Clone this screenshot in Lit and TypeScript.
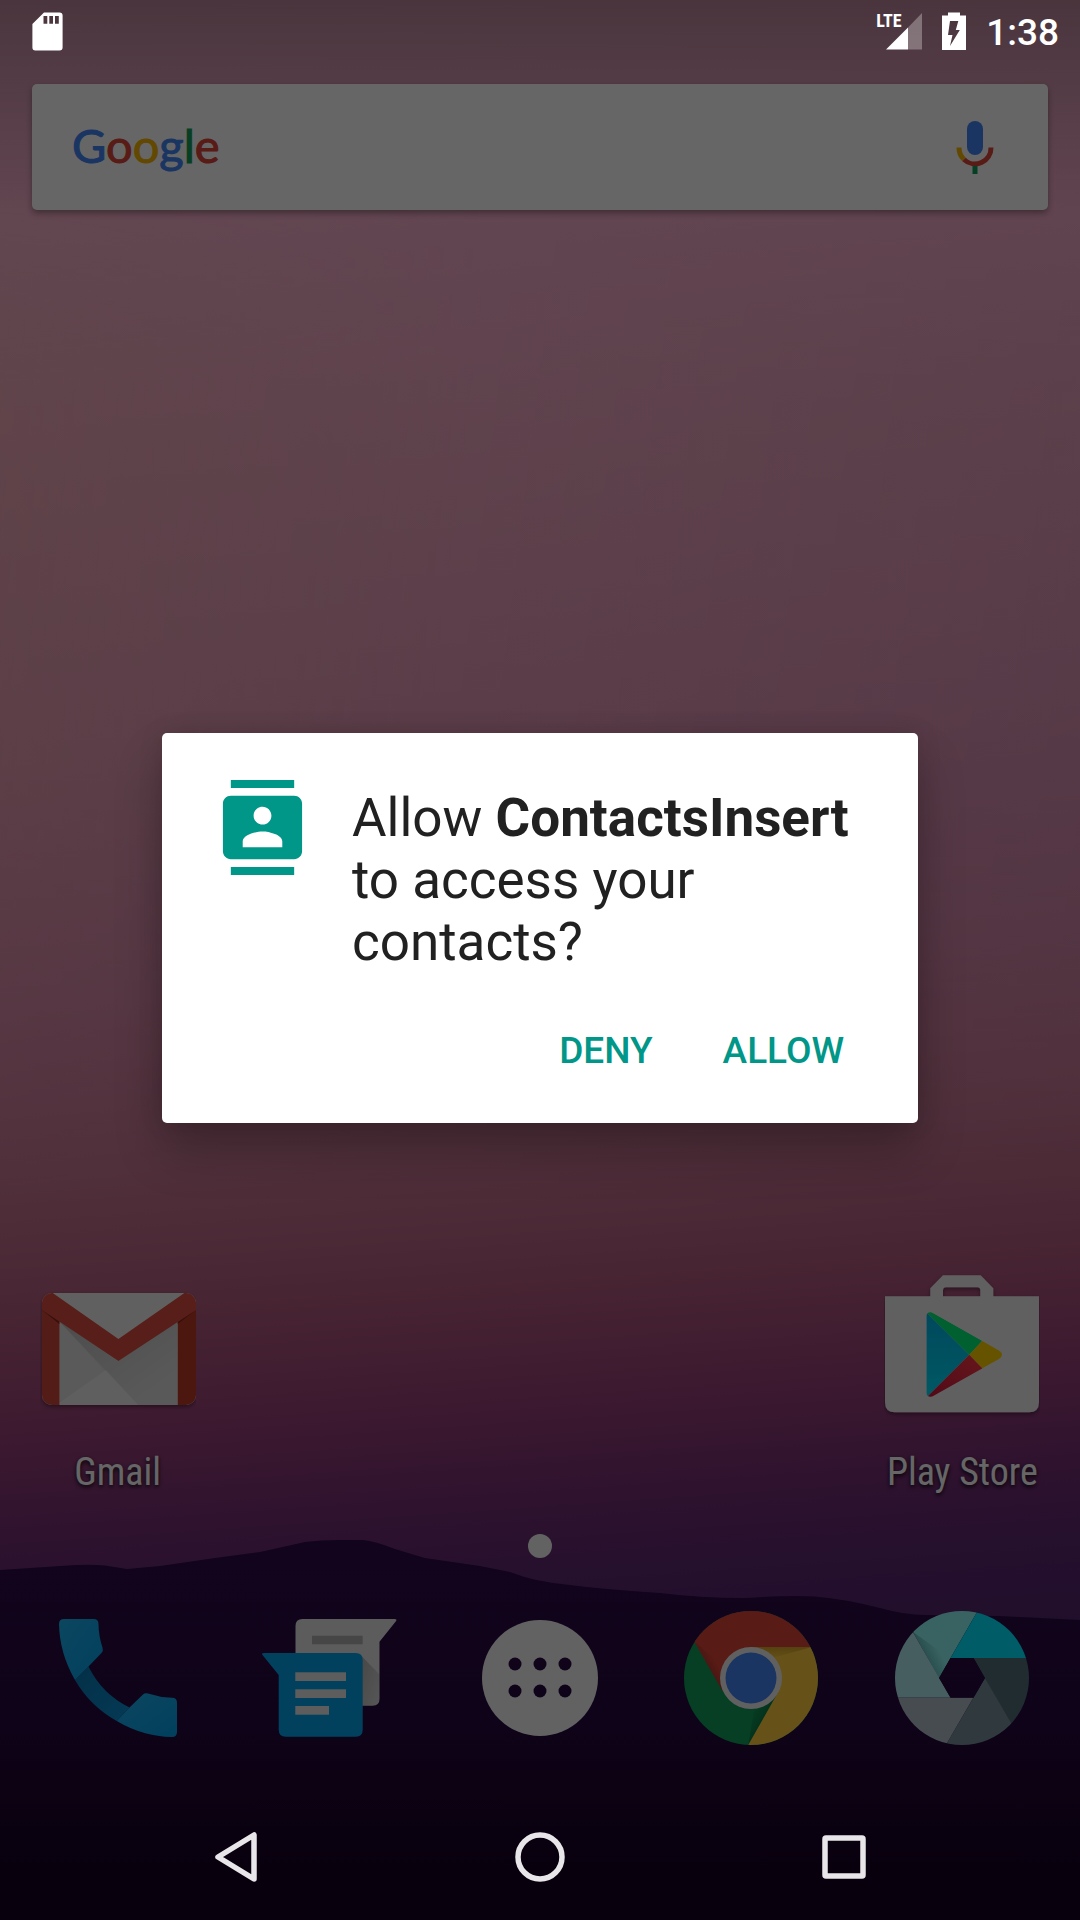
import { LitElement, html, css, svg } from "lit";
import { customElement, property, state } from "lit/decorators.js";

/* ---------- Application icons, all on a 156 x 156 canvas ---------- */

const gmailIcon = svg`
  <svg viewBox="0 0 156 156" width="156" height="156" aria-hidden="true">
    <defs>
      <clipPath id="gm-clip"><rect x="2" y="21" width="154" height="112" rx="10"/></clipPath>
      <linearGradient id="gm-shade" x1="0" y1="0" x2="1" y2="1">
        <stop offset="0" stop-color="#000" stop-opacity=".14"/>
        <stop offset=".8" stop-color="#000" stop-opacity="0"/>
      </linearGradient>
      <filter id="gm-drop" x="-10%" y="-10%" width="120%" height="130%">
        <feDropShadow dx="0" dy="2" stdDeviation="2" flood-color="#000" flood-opacity=".4"/>
      </filter>
    </defs>
    <g filter="url(#gm-drop)">
      <g clip-path="url(#gm-clip)">
        <rect x="2" y="21" width="154" height="112" fill="#eeeeee"/>
        <path d="M19 49 L66 98 L19 131Z" fill="#e0e0e0"/>
        <path d="M19 49 L78 89 L137 49 V133 H95Z" fill="#dedede"/>
        <path d="M19 133 L66 98 L98 133Z" fill="#eeeeee"/>
        <path d="M19 49 L78 89 L137 49 V133 H98Z" fill="url(#gm-shade)"/>
        <path d="M2 30 H19.400 V133 H2Z" fill="#cf4637"/>
        <path d="M137.700 30 H156 V133 H137.700Z" fill="#bd3a26"/>
        <path d="M2 38 L19.400 52 V49 L2 36Z M156 38 L137.700 52 V49Z" fill="#8e2318"/>
        <path d="M12.700 21 H144.400 L78.400 67Z" fill="#f0f0f0"/>
        <path d="M2 21 H12.700 L78.400 67 L144.400 21 H156 V38 L78.400 89 L2 38Z" fill="#db4b40"/>
      </g>
    </g>
  </svg>`;

const playIcon = svg`
  <svg viewBox="0 0 156 156" width="156" height="156" aria-hidden="true">
    <defs>
      <linearGradient id="pl-blue" x1="0" y1="0" x2="0" y2="1">
        <stop offset="0" stop-color="#00b4e6"/><stop offset="1" stop-color="#00e0fa"/>
      </linearGradient>
      <linearGradient id="pl-red" x1="1" y1="0" x2="0" y2="1">
        <stop offset="0" stop-color="#ff3a44"/><stop offset="1" stop-color="#c9163c"/>
      </linearGradient>
      <clipPath id="pl-clip">
        <path d="M42.600 44 Q42.600 40 47 40.300 Q48.500 40.500 51 42 L115 78.500 Q118 80.500 118 82.700 Q118 85 115 87 L51 123 Q48.500 124.500 47 124.700 Q42.600 125 42.600 121Z"/>
      </clipPath>
      <filter id="pl-drop" x="-10%" y="-10%" width="120%" height="130%">
        <feDropShadow dx="0" dy="2" stdDeviation="2" flood-color="#000" flood-opacity=".4"/>
      </filter>
    </defs>
    <path filter="url(#pl-drop)" fill="#f1f1f1" fill-rule="evenodd"
      d="M1 24.300 H46.300 V16.300 L59 3.300 H96.600 L109.300 16.300 V24.300 H155 V130.300 Q155 140.300 145 140.300 H11 Q1 140.300 1 130.300Z M59 24.300 H96.300 V18.300 Q96.300 15.300 93.300 15.300 H62 Q59 15.300 59 18.300Z"/>
    <g clip-path="url(#pl-clip)">
      <path d="M40 38 L85.300 82.700 L40 128Z" fill="url(#pl-blue)"/>
      <path d="M43.500 38 L98.300 68.700 L85.300 82.700 L42 40Z" fill="#00f076"/>
      <path d="M98.300 68.700 L85.300 82.700 L98.300 96.500 L122 84 V76 L98.300 66Z" fill="#ffd000"/>
      <path d="M85.300 82.700 L98.900 97 L44 130 L42 126Z" fill="url(#pl-red)"/>
    </g>
  </svg>`;

const phoneIcon = svg`
  <svg viewBox="0 0 156 156" width="156" height="156" aria-hidden="true">
    <defs>
      <linearGradient id="ph-fill" x1="0" y1="0" x2="1" y2="1">
        <stop offset="0" stop-color="#1fb0ee"/><stop offset="1" stop-color="#03a0ea"/>
      </linearGradient>
      <linearGradient id="ph-mid" x1="0" y1="0" x2="1" y2="1">
        <stop offset="0" stop-color="#0a78b4"/><stop offset="1" stop-color="#0c90d4"/>
      </linearGradient>
    </defs>
    <path fill="url(#ph-mid)" d="M48.500 66.500 Q62 94 89.500 107.500 L76.700 121 Q50 106 35 80Z"/>
    <path fill="url(#ph-fill)" d="M24 19 H53.500 Q58.500 19 58.500 24 Q58.600 36 62.600 48 Q63.500 50.500 61.500 53 L48.500 66.500 L35 80 Q19.500 53 19 24 Q19 19 24 19Z"/>
    <path fill="url(#ph-fill)" d="M76.700 121 L89.500 107.500 L103 94.500 Q105 92.500 108 93.500 Q120 97.500 132 97.800 Q137 97.800 137 102.800 V132 Q137 137 132 137 Q103 136.500 76.700 121Z"/>
  </svg>`;

const messengerIcon = svg`
  <svg viewBox="0 0 156 156" width="156" height="156" aria-hidden="true">
    <defs>
      <linearGradient id="ms-shade" x1="0" y1="0" x2="1" y2="1">
        <stop offset="0" stop-color="#000" stop-opacity=".22"/>
        <stop offset="1" stop-color="#000" stop-opacity=".06"/>
      </linearGradient>
    </defs>
    <path fill="#e6e6e6" d="M51.500 19 H143.500 Q146.700 19 144.700 21.500 L128.500 41.700 V98.700 Q128.500 105.700 121.500 105.700 H44.500 V26 Q44.500 19 51.500 19Z"/>
    <path fill="url(#ms-shade)" d="M110 55.500 L128.500 74.500 V98.700 Q128.500 105.700 121.500 105.700 H110Z"/>
    <rect x="61" y="35.700" width="50.700" height="8.600" fill="#b0b0b0"/>
    <path fill="#03a4ec" d="M13 53 H104.700 Q111.700 53 111.700 60 V129.700 Q111.700 136.700 104.700 136.700 H34.700 Q27.700 136.700 27.700 129.700 V75 L11.500 55 Q10 53 13 53Z"/>
    <g fill="#e9e9e9">
      <rect x="44.300" y="72.300" width="50.700" height="8.700"/>
      <rect x="44.300" y="89.300" width="50.700" height="8.700"/>
      <rect x="44.300" y="106" width="33.700" height="8.700"/>
    </g>
  </svg>`;

const appsIcon = svg`
  <svg viewBox="0 0 156 156" width="156" height="156" aria-hidden="true">
    <mask id="ap-holes">
      <rect width="156" height="156" fill="#fff"/>
      <g fill="#000">
        ${[53, 78, 103].map((x) => [64, 91].map((y) => svg`<circle cx=${x} cy=${y} r="6.500"/>`))}
      </g>
    </mask>
    <circle cx="78" cy="78" r="58" fill="#f5f5f5" mask="url(#ap-holes)"/>
  </svg>`;

const chromeIcon = svg`
  <svg viewBox="0 0 156 156" width="156" height="156" aria-hidden="true">
    <defs>
      <clipPath id="ch-clip"><circle cx="78" cy="78" r="67"/></clipPath>
      <linearGradient id="ch-r" gradientUnits="userSpaceOnUse" x1="29" y1="74" x2="44" y2="65">
        <stop offset="0" stop-color="#000" stop-opacity=".3"/><stop offset="1" stop-color="#000" stop-opacity="0"/>
      </linearGradient>
      <linearGradient id="ch-y" gradientUnits="userSpaceOnUse" x1="0" y1="47" x2="0" y2="60">
        <stop offset="0" stop-color="#8a5a00" stop-opacity=".35"/><stop offset="1" stop-color="#8a5a00" stop-opacity="0"/>
      </linearGradient>
      <linearGradient id="ch-g" gradientUnits="userSpaceOnUse" x1="90" y1="120" x2="76" y2="112">
        <stop offset="0" stop-color="#000" stop-opacity=".2"/><stop offset="1" stop-color="#000" stop-opacity="0"/>
      </linearGradient>
    </defs>
    <g clip-path="url(#ch-clip)">
      <rect width="156" height="156" fill="#0f9d58"/>
      <path d="M102.800 96.700 L75 146 L82 106Z" fill="url(#ch-g)"/>
      <path d="M78 47 H150 V156 H69 L105 92.500 L78 78Z" fill="#ffcd40"/>
      <path d="M78 47 H139 L100 58Z" fill="url(#ch-y)"/>
      <path d="M18 36 L49.500 91 L78 78 V47 H156 V0 H0Z" fill="#db4437"/>
      <path d="M21.500 41.700 L49.500 91 L50 66Z" fill="url(#ch-r)"/>
    </g>
    <circle cx="78" cy="78" r="31" fill="#f1f1f1"/>
    <circle cx="78" cy="78" r="25.500" fill="#4285f4"/>
  </svg>`;

const cameraIcon = svg`
  <svg viewBox="0 0 156 156" width="156" height="156" aria-hidden="true">
    <defs>
      <mask id="cm-mask">
        <circle cx="78" cy="78" r="67" fill="#fff"/>
        <path d="M66.500 58 H89.500 L101 78 L89.500 97.700 H66.500 L55 78Z" fill="#000"/>
      </mask>
      <linearGradient id="cm-shade" gradientUnits="userSpaceOnUse" x1="38" y1="50" x2="52" y2="43">
        <stop offset="0" stop-color="#004d50" stop-opacity=".3"/><stop offset="1" stop-color="#004d50" stop-opacity="0"/>
      </linearGradient>
    </defs>
    <g mask="url(#cm-mask)">
      <path d="M55 78 L24 23 L60 0 H100 L66.500 58Z" fill="#90f8f4"/>
      <path d="M55 78 L29 32 L66 58Z" fill="url(#cm-shade)"/>
      <path d="M66.500 58 L100 0 H156 V58Z" fill="#00e5ff"/>
      <path d="M89.500 58 H156 V130 L130 130Z" fill="#546e7a"/>
      <path d="M101 78 L131 130 L120 156 H55.500 L89.500 97.700Z" fill="#78909c"/>
      <path d="M0 97.500 H89.500 L55.500 156 H0Z" fill="#b0bec5"/>
      <path d="M0 97.500 V20 L22 20 L66.500 97.500Z" fill="#b2ebf2"/>
    </g>
  </svg>`;

/* ---------- Status, search and dialog glyphs ---------- */

const sdCardIcon = svg`
  <svg viewBox="0 0 32 40" width="32" height="40" aria-hidden="true">
    <path fill="#fff" fill-rule="evenodd" d="M12 -.5 H27.500 Q30.600 -.5 30.600 2.500 V34.500 Q30.600 37.500 27.500 37.500 H3.300 Q.4 37.500 .4 34.500 V11Z
      M11.500 3 V10.800 H15.300 V3Z M17.300 3 V10.800 H21 V3Z M23 3 V10.800 H26.800 V3Z"/>
  </svg>`;

const signalIcon = svg`
  <svg viewBox="0 0 36 38" width="36" height="38" aria-hidden="true">
    <path fill="#fff" fill-opacity=".3" d="M36 -1 V35.500 H22 V13.500Z"/>
    <path fill="#fff" d="M22 13.500 V35.500 H0Z"/>
  </svg>`;

const batteryIcon = svg`
  <svg viewBox="0 0 24 40" width="24" height="40" aria-hidden="true">
    <path fill="#fff" fill-rule="evenodd" d="M6 -.6 H18 V2.400 H24 V37 H0 V2.400 H6Z
      M8 8 H16.300 L13.800 17 H17.800 L8 33 L10.500 22 H6Z"/>
  </svg>`;

const micIcon = svg`
  <svg viewBox="0 0 40 56" width="40" height="56" aria-hidden="true">
    <rect x="12" y="2" width="16" height="34" rx="8" fill="#4285f4"/>
    <path d="M4 28.500 A16 16 0 0 0 9 40.500" fill="none" stroke="#f4b400" stroke-width="5"/>
    <path d="M36 28.500 A16 16 0 0 1 9 40.500" fill="none" stroke="#db4437" stroke-width="5"/>
    <rect x="17.500" y="47" width="5" height="8" fill="#0f9d58"/>
  </svg>`;

const contactsIcon = svg`
  <svg viewBox="0 0 24 24" width="95" height="95" aria-hidden="true">
    <path fill="#009688" d="M20 0H4v2h16V0zM4 24h16v-2H4v2zM20 4H4c-1.100 0-2 .9-2 2v12c0 1.100.9 2 2 2h16c1.100 0 2-.9 2-2V6c0-1.100-.9-2-2-2zm-8 2.750c1.240 0 2.250 1.010 2.250 2.250s-1.010 2.250-2.250 2.250S9.750 10.240 9.750 9 10.760 6.750 12 6.750zM17 17H7v-1.500c0-1.670 3.330-2.500 5-2.500s5 .83 5 2.500V17z"/>
  </svg>`;

@customElement("status-bar")
class StatusBar extends LitElement {
  @property() time = "";

  static styles = css`
    :host {
      display: flex;
      align-items: center;
      height: 66px;
      padding: 0 21px 0 32px;
      box-sizing: border-box;
      color: #fff;
      font-family: Roboto, sans-serif;
    }
    svg {
      display: block;
      overflow: visible;
    }
    .right {
      display: flex;
      align-items: center;
      gap: 20px;
      margin-left: auto;
    }
    .network {
      position: relative;
      padding-left: 10px;
    }
    .type {
      position: absolute;
      left: 0;
      top: -2px;
      font: bold 18px/18px "Roboto Condensed", "Liberation Sans Narrow", Roboto, sans-serif;
    }
    .time {
      font-size: 37px;
      line-height: 44px;
      font-weight: 500;
    }
  `;

  render() {
    return html`
      ${sdCardIcon}
      <div class="right">
        <div class="network"><span class="type">LTE</span>${signalIcon}</div>
        ${batteryIcon}
        <span class="time">${this.time}</span>
      </div>
    `;
  }
}

@customElement("search-bar")
class SearchBar extends LitElement {
  static styles = css`
    :host {
      display: flex;
      align-items: center;
      justify-content: space-between;
      height: 126px;
      padding: 0 53px 0 40px;
      box-sizing: border-box;
      border-radius: 5px;
      background: #fff;
      box-shadow: 0 3px 6px rgba(0, 0, 0, 0.35);
    }
    button {
      display: block;
      margin: 0;
      padding: 0;
      border: 0;
      background: none;
    }
    .logo {
      padding-bottom: 4px;
      font: 400 47px/60px Lato, sans-serif;
      -webkit-text-stroke: 1px;
    }
    .blue {
      color: #4285f4;
    }
    .red {
      color: #db4437;
    }
    .yellow {
      color: #f4b400;
    }
    .green {
      color: #0f9d58;
    }
    svg {
      display: block;
    }
  `;

  render() {
    return html`
      <button class="logo" aria-label="Google"
        ><span class="blue">G</span><span class="red">o</span><span class="yellow">o</span
        ><span class="blue">g</span><span class="green">l</span><span class="red">e</span></button>
      <button aria-label="Voice search">${micIcon}</button>
    `;
  }
}

@customElement("app-shortcut")
class AppShortcut extends LitElement {
  @property() name = "";
  @property({ type: Boolean }) labelled = false;
  @property({ attribute: false }) icon: unknown;

  static styles = css`
    button {
      display: flex;
      flex-direction: column;
      align-items: center;
      gap: 22px;
      width: 100%;
      margin: 0;
      padding: 0;
      border: 0;
      background: none;
    }
    svg {
      display: block;
    }
    .label {
      color: #fff;
      font: 400 38px/44px "Roboto Condensed", "Liberation Sans Narrow", Roboto, sans-serif;
      white-space: nowrap;
      text-shadow: 0 2px 4px rgba(0, 0, 0, 0.9);
    }
  `;

  render() {
    return html`
      <button aria-label=${this.name}>
        ${this.icon}${this.labelled ? html`<span class="label">${this.name}</span>` : null}
      </button>
    `;
  }
}

@customElement("permission-dialog")
class PermissionDialog extends LitElement {
  @property() app = "";
  @property() resource = "";

  static styles = css`
    :host {
      display: block;
      width: 70%;
      box-sizing: border-box;
      padding: 47px 39px 30px 53px;
      border-radius: 5px;
      background: #fff;
      box-shadow: 0 28px 48px rgba(0, 0, 0, 0.24), 0 0 24px rgba(0, 0, 0, 0.12);
      font-family: Roboto, sans-serif;
    }
    .message {
      display: flex;
      align-items: flex-start;
      gap: 42px;
    }
    svg {
      display: block;
      flex: none;
    }
    p {
      margin: 0;
      padding-top: 7px;
      color: #212121;
      font-size: 53px;
      line-height: 62px;
    }
    .actions {
      display: flex;
      justify-content: flex-end;
      margin-top: 36px;
    }
    button {
      margin: 0;
      padding: 20px 35px;
      border: 0;
      background: none;
      color: #009688;
      font: 500 37px/44px Roboto, sans-serif;
    }
  `;

  private choose(granted: boolean) {
    this.dispatchEvent(new CustomEvent("choice", { detail: granted }));
  }

  render() {
    return html`
      <div class="message">
        ${contactsIcon}
        <p>Allow <b>${this.app}</b> to access your ${this.resource}?</p>
      </div>
      <div class="actions">
        <button @click=${() => this.choose(false)}>DENY</button>
        <button @click=${() => this.choose(true)}>ALLOW</button>
      </div>
    `;
  }
}

@customElement("navigation-bar")
class NavigationBar extends LitElement {
  static styles = css`
    :host {
      display: grid;
      grid-template-columns: repeat(3, 304px);
      justify-content: center;
      height: 126px;
    }
    button {
      display: grid;
      place-items: center;
      margin: 0;
      padding: 0;
      border: 0;
      background: none;
    }
    svg {
      display: block;
      fill: none;
      stroke: #e8e6e9;
      stroke-width: 5.500;
      stroke-linejoin: round;
    }
  `;

  render() {
    return html`
      <button aria-label="Back">
        <svg viewBox="0 0 56 56" width="56" height="56"><path d="M46 6 V50 L10 28Z" /></svg>
      </button>
      <button aria-label="Home">
        <svg viewBox="0 0 56 56" width="56" height="56"><circle cx="28" cy="28" r="22" /></svg>
      </button>
      <button aria-label="Overview">
        <svg viewBox="0 0 56 56" width="56" height="56"><rect x="9" y="9" width="38" height="38" rx="1" /></svg>
      </button>
    `;
  }
}

@customElement("app-root")
class AppRoot extends LitElement {
  @state() private asking = true;

  static styles = css`
    :host {
      display: block;
    }
    .screen {
      position: relative;
      display: flex;
      flex-direction: column;
      min-height: 100vh;
      overflow: hidden;
      background: linear-gradient(
        176deg,
        #f6b2ce 0%,
        #f4aeca 12%,
        #eba4bd 25%,
        #e299b6 38%,
        #d689ab 50%,
        #c87894 59%,
        #b45c7e 66%,
        #984078 72%,
        #752e74 77%,
        #5c2872 81%,
        #52266e 85%
      );
    }
    .glow {
      position: absolute;
      inset: 0;
      background: linear-gradient(97deg, rgba(255, 190, 140, 0.14), rgba(255, 190, 140, 0) 40%, rgba(110, 80, 130, 0.08));
      -webkit-mask-image: linear-gradient(transparent 8%, #000 20% 40%, transparent 64%);
      mask-image: linear-gradient(transparent 8%, #000 20% 40%, transparent 64%);
    }
    .shade {
      position: absolute;
      inset: 0 0 auto;
      height: 210px;
      background: linear-gradient(rgba(0, 0, 0, 0.25), rgba(0, 0, 0, 0));
    }
    .hills {
      position: absolute;
      left: 0;
      bottom: 0;
      width: 100%;
      height: 380px;
    }
    .scrim {
      position: absolute;
      inset: 0;
      z-index: 1;
      background: rgba(0, 0, 0, 0.6);
    }
    .system {
      position: relative;
      z-index: 4;
    }
    .home {
      position: relative;
      display: flex;
      flex: 1;
      flex-direction: column;
      padding: 18px 12px 38px;
    }
    .search {
      margin: 0 20px;
    }
    .row {
      display: grid;
      grid-template-columns: repeat(5, 1fr);
    }
    .shortcuts {
      margin-top: auto;
    }
    .last {
      grid-column: 5;
    }
    .page {
      align-self: center;
      width: 24px;
      height: 24px;
      margin: 40px 0 42px;
      border-radius: 50%;
      background: #f5f5f5;
    }
    .overlay {
      position: absolute;
      inset: 0;
      z-index: 3;
      display: grid;
      align-items: center;
      justify-items: center;
      padding: 80px 0 144px;
    }
  `;

  render() {
    return html`
      <div class="screen">
        <div class="glow"></div>
        <div class="shade"></div>
        <svg class="hills" viewBox="0 0 1080 380" preserveAspectRatio="none" aria-hidden="true">
          <defs>
            <linearGradient id="hill" x1="0" y1="0" x2="0" y2="1">
              <stop offset="0" stop-color="#2d0a48" />
              <stop offset=".45" stop-color="#260940" />
              <stop offset=".72" stop-color="#1c042c" />
              <stop offset="1" stop-color="#14001e" />
            </linearGradient>
          </defs>
          <path
            fill="url(#hill)"
            d="M0 30 L60 26 Q90 24 105 25.500 L127 29 L160 26 L215 18 L260 12 L305 2 Q320 0 340 0 H363 Q375 1 395 9 L425 18 L480 26 L510 32 Q535 42 570 45 Q600 49 660 53 Q700 58 745 58 Q790 55 815 56.500 Q845 59 880 68 Q905 75 925 75 L1000 76 L1080 80 V380 H0Z"
          />
        </svg>

        <status-bar class="system" time="1:38"></status-bar>
        <main class="home">
          <search-bar class="search"></search-bar>
          <div class="row shortcuts">
            <app-shortcut name="Gmail" labelled .icon=${gmailIcon}></app-shortcut>
            <app-shortcut class="last" name="Play Store" labelled .icon=${playIcon}></app-shortcut>
          </div>
          <span class="page"></span>
          <div class="row">
            <app-shortcut name="Phone" .icon=${phoneIcon}></app-shortcut>
            <app-shortcut name="Messenger" .icon=${messengerIcon}></app-shortcut>
            <app-shortcut name="Apps" .icon=${appsIcon}></app-shortcut>
            <app-shortcut name="Chrome" .icon=${chromeIcon}></app-shortcut>
            <app-shortcut name="Camera" .icon=${cameraIcon}></app-shortcut>
          </div>
        </main>
        <navigation-bar class="system"></navigation-bar>

        ${this.asking
          ? html`
              <div class="scrim"></div>
              <div class="overlay">
                <permission-dialog
                  role="dialog"
                  app="ContactsInsert"
                  resource="contacts"
                  @choice=${() => (this.asking = false)}
                ></permission-dialog>
              </div>
            `
          : null}
      </div>
    `;
  }
}
